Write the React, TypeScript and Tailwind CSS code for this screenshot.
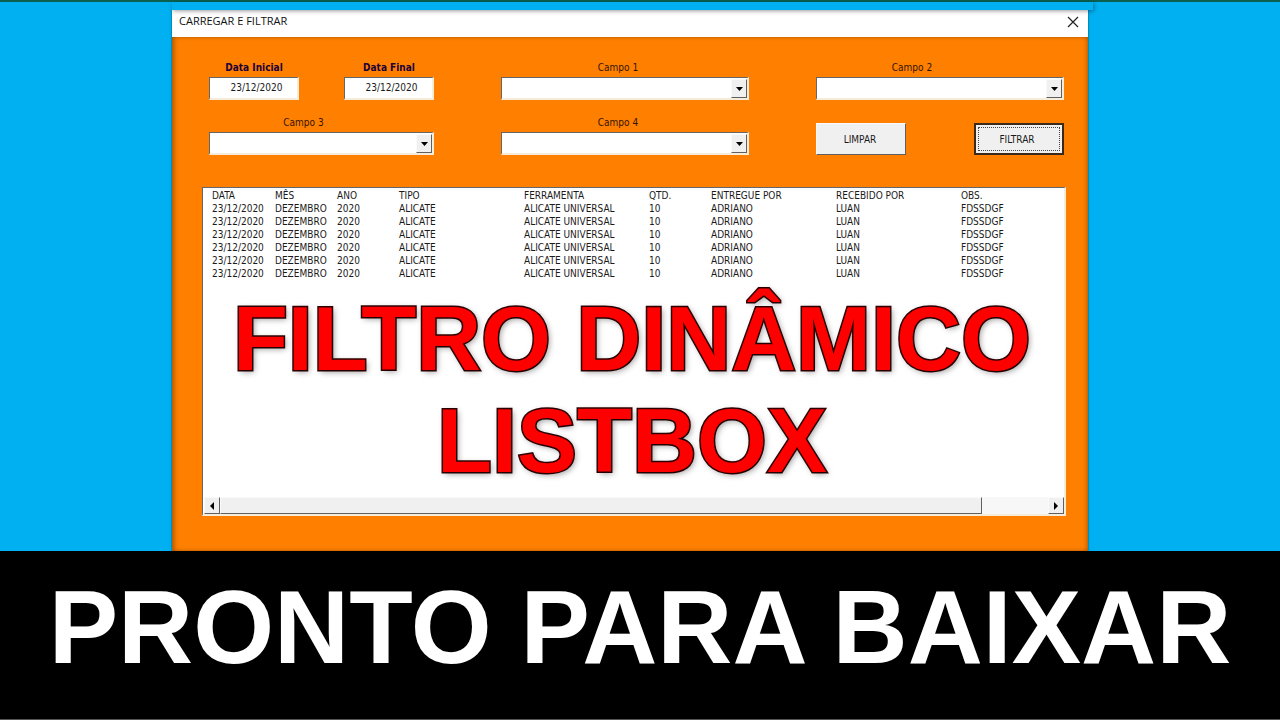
import React from "react";

const columns = [
  { title: "DATA", width: "w-[63px]" },
  { title: "MÊS", width: "w-[62px]" },
  { title: "ANO", width: "w-[62px]" },
  { title: "TIPO", width: "w-[125px]" },
  { title: "FERRAMENTA", width: "w-[125px]" },
  { title: "QTD.", width: "w-[62px]" },
  { title: "ENTREGUE POR", width: "w-[125px]" },
  { title: "RECEBIDO POR", width: "w-[125px]" },
  { title: "OBS.", width: "w-auto" },
];

const record = [
  "23/12/2020",
  "DEZEMBRO",
  "2020",
  "ALICATE",
  "ALICATE UNIVERSAL",
  "10",
  "ADRIANO",
  "LUAN",
  "FDSSDGF",
];

const rows = Array.from({ length: 6 }, () => record);

const sunken =
  "border-t border-l border-r-2 border-b-2 border-t-[#666] border-l-[#666] border-r-[#f7ecd9] border-b-[#f7ecd9] bg-white";
const raised =
  "border border-t-[#fafafa] border-l-[#fafafa] border-r-[#606060] border-b-[#606060] bg-[#f0f0f0]";

const DateField = ({ id, label }: { id: string; label: string }) => (
  <div className="flex w-[90px] flex-col gap-[3px]">
    <label htmlFor={id} className="text-center font-bold whitespace-nowrap text-[#1c0038]">
      {label}
    </label>
    <input
      id={id}
      type="text"
      defaultValue="23/12/2020"
      className={`h-[23px] w-full pb-px pl-1.5 text-center outline-none ${sunken}`}
    />
  </div>
);

const Combo = ({
  id,
  label,
  labelClass,
}: {
  id: string;
  label: string;
  labelClass: string;
}) => (
  <div className="flex flex-col gap-[3px]">
    <label htmlFor={id} className={`text-center text-[#331400] ${labelClass}`}>
      {label}
    </label>
    <div className="relative">
      <select
        id={id}
        className={`block h-[23px] w-full appearance-none outline-none ${sunken}`}
      >
        <option></option>
      </select>
      <span
        className={`pointer-events-none absolute top-0.5 right-0.5 flex h-[19px] w-4 items-center justify-center ${raised}`}
      >
        <svg width="7" height="4" viewBox="0 0 7 4">
          <path d="M0 0h7L3.5 4z" fill="#000" />
        </svg>
      </span>
    </div>
  </div>
);

const App = () => {
  return (
    <div className="flex min-h-screen flex-col bg-[#00b0f0] font-['Liberation_Sans',sans-serif]">
      {/* Top strip */}
      <div className="h-0.5 bg-[#0b6050]" />
      <div className="relative z-10 mr-[187px] ml-43 h-2 bg-[#00b0f0] shadow-[1px_1px_4px_rgba(0,0,0,0.4)]" />

      {/* Form window */}
      <div className="flex grow flex-col pr-48 pl-43">
        <div className="flex grow flex-col bg-[#ff8000] shadow-[0_0_2px_rgba(0,0,0,0.6)]">
          <div className="flex h-[27px] items-center justify-between bg-white pr-[9px] pb-1 pl-[7px]">
            <span className="font-['Open_Sans',sans-serif] text-[11px] text-[#111]">
              CARREGAR E FILTRAR
            </span>
            <button type="button" aria-label="Fechar">
              <svg width="12" height="12" viewBox="0 0 12 12" stroke="#222" strokeWidth="1.2">
                <path d="M1 1l10 10M11 1L1 11" />
              </svg>
            </button>
          </div>

          <div className="grow pt-6 pr-[22px] pb-[35px] pl-[30px] font-['DejaVu_Sans_Condensed','DejaVu_Sans',sans-serif] text-[10px] leading-[13px] text-[#1a1a1a] shadow-[inset_3px_0_5px_-1px_rgba(0,0,0,0.35),inset_-3px_0_5px_-2px_rgba(0,0,0,0.3)]">
            {/* Filters */}
            <form
              className="grid grid-cols-[225fr_248fr_248fr] gap-x-[67px] gap-y-4 pr-0.5 pl-[7px]"
              onSubmit={(e) => e.preventDefault()}
            >
              <div className="flex justify-between">
                <DateField id="data-inicial" label="Data Inicial" />
                <DateField id="data-final" label="Data Final" />
              </div>
              <Combo id="campo1" label="Campo 1" labelClass="pr-3.5" />
              <Combo id="campo2" label="Campo 2" labelClass="pr-14" />
              <Combo id="campo3" label="Campo 3" labelClass="pr-9" />
              <Combo id="campo4" label="Campo 4" labelClass="pr-3.5" />
              <div className="flex items-end justify-between">
                <button type="reset" className={`h-8 w-[90px] pr-0.5 ${raised}`}>
                  LIMPAR
                </button>
                <button
                  type="submit"
                  className="h-8 w-[90px] border-2 border-[#3a2a1a] bg-[#f0f0f0] p-0.5"
                >
                  <span className="flex h-full items-center justify-center border border-dotted border-[#444] pr-1">
                    FILTRAR
                  </span>
                </button>
              </div>
            </form>

            {/* List box */}
            <div className={`mt-8 flex h-[329px] flex-col overflow-hidden pt-px pl-px ${sunken}`}>
              <table className="ml-2 table-fixed border-collapse text-left whitespace-nowrap">
                <thead>
                  <tr>
                    {columns.map((column) => (
                      <th key={column.title} className={`p-0 font-normal ${column.width}`}>
                        {column.title}
                      </th>
                    ))}
                  </tr>
                </thead>
                <tbody>
                  {rows.map((row, i) => (
                    <tr key={i}>
                      {row.map((cell, j) => (
                        <td key={j} className="p-0">
                          {cell}
                        </td>
                      ))}
                    </tr>
                  ))}
                </tbody>
              </table>

              <h1 className="mt-2 pr-1 text-center font-['Liberation_Sans',sans-serif] text-[90px] leading-[102px] font-bold text-[#ff0000] [-webkit-text-stroke:3px_#300000] [paint-order:stroke_fill] [text-shadow:2px_2px_6px_rgba(0,0,0,0.4)]">
                FILTRO DINÂMICO
                <br />
                LISTBOX
              </h1>

              {/* Horizontal scroll bar */}
              <div className="mt-auto flex h-[17px] bg-[#f7f7f7]">
                <button
                  type="button"
                  aria-label="Rolar para a esquerda"
                  className={`flex w-4 items-center justify-center ${raised}`}
                >
                  <svg width="4" height="8" viewBox="0 0 4 8">
                    <path d="M4 0v8L0 4z" fill="#000" />
                  </svg>
                </button>
                <div className="flex grow">
                  <div className={`w-[92%] ${raised}`} />
                </div>
                <button
                  type="button"
                  aria-label="Rolar para a direita"
                  className={`flex w-4 items-center justify-center ${raised}`}
                >
                  <svg width="4" height="8" viewBox="0 0 4 8">
                    <path d="M0 0v8l4-4z" fill="#000" />
                  </svg>
                </button>
              </div>
            </div>
          </div>
        </div>
      </div>

      {/* Bottom banner */}
      <div className="relative border-b border-[#555] bg-black pt-4 pb-8">
        <p className="text-center text-[104px] leading-[120px] font-bold whitespace-nowrap text-white">
          PRONTO PARA BAIXAR
        </p>
      </div>
    </div>
  );
};

export default App;
